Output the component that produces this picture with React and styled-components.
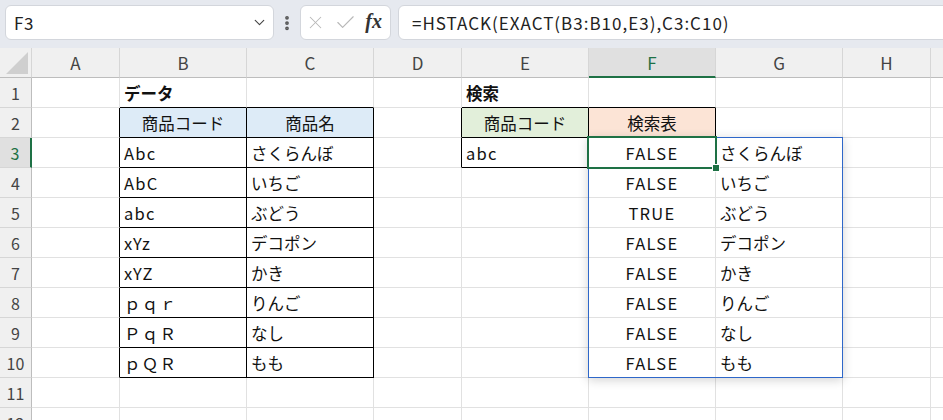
import React from 'react'
import styled, { createGlobalStyle } from 'styled-components'
import { ChevronDown, EllipsisVertical, X, Check } from 'lucide-react'

const FONT = '"Noto Sans CJK JP", "Noto Sans", sans-serif'

const Global = createGlobalStyle`
  html, body {
    margin: 0;
    background: #fff;
    font-family: ${FONT};
    overflow: hidden;
  }
`

const COLS = ['A', 'B', 'C', 'D', 'E', 'F', 'G', 'H', '']
const WIDTHS = [32, 88, 127, 127, 88, 127, 127, 127, 88, 100]

const codes = ['Abc', 'AbC', 'abc', 'xYz', 'xYZ', 'ｐｑｒ', 'ＰｑＲ', 'ｐＱＲ']
const names = ['さくらんぼ', 'いちご', 'ぶどう', 'デコポン', 'かき', 'りんご', 'なし', 'もも']
const flags = codes.map((c) => (c === 'abc' ? 'TRUE' : 'FALSE'))

export default function App() {
  // build cell data per row: index 0..8 => A..I
  const rows = []
  for (let r = 1; r <= 12; r++) {
    const cells = COLS.map(() => ({ text: '', bg: null, rb: null, bb: null }))
    if (r === 1) {
      cells[1].text = 'データ'
      cells[1].bold = true
      cells[4].text = '検索'
      cells[4].bold = true
    }
    if (r === 2) {
      cells[1] = { text: '商品コード', bg: '#ddebf7', center: true }
      cells[2] = { text: '商品名', bg: '#ddebf7', center: true }
      cells[4] = { text: '商品コード', bg: '#e2efda', center: true }
      cells[5] = { text: '検索表', bg: '#fce4d6', center: true }
    }
    if (r >= 3 && r <= 10) {
      cells[1].text = codes[r - 3]
      cells[1].latin = true
      cells[2].text = names[r - 3]
      cells[5].text = flags[r - 3]
      cells[5].center = true
      cells[5].latin = true
      cells[6].text = names[r - 3]
    }
    if (r === 3) {
      cells[4].text = 'abc'
      cells[4].latin = true
    }

    // black borders for the two tables
    if (r === 1) {
      ;[1, 2, 4, 5].forEach((i) => (cells[i].bb = '#000'))
    }
    if (r >= 2 && r <= 10) {
      cells[0].rb = '#000'
      cells[1].rb = '#000'
      cells[2].rb = '#000'
      cells[1].bb = '#000'
      cells[2].bb = '#000'
    }
    if (r === 2) {
      cells[3].rb = '#000'
      cells[4].rb = '#000'
      cells[5].rb = '#000'
      cells[4].bb = '#000'
      cells[5].bb = '#000'
    }
    if (r === 3) {
      cells[3].rb = '#000'
      cells[4].rb = '#000'
      cells[4].bb = '#000'
    }
    rows.push(cells)
  }

  return (
    <Page>
      <Global />
      <TopBar>
        <NameBox>
          <span>F3</span>
          <ChevronDown size={17} strokeWidth={1.6} color="#444" />
        </NameBox>
        <Dots>
          <EllipsisVertical size={18} strokeWidth={3} color="#555" />
        </Dots>
        <FxBox>
          <X size={21} strokeWidth={1.2} color="#b8b8b8" />
          <Check size={23} strokeWidth={1.2} color="#b8b8b8" />
          <Fx>fx</Fx>
        </FxBox>
        <FormulaBox>=HSTACK(EXACT(B3:B10,E3),C3:C10)</FormulaBox>
      </TopBar>

      <Sheet>
        <Corner>
          <svg width="22" height="22" viewBox="0 0 22 22">
            <polygon points="22,0 22,22 0,22" fill="#cfcfcf" />
          </svg>
        </Corner>
        {COLS.map((c, i) => (
          <ColHead key={i} $active={c === 'F'}>
            {c}
          </ColHead>
        ))}
        {rows.map((cells, ri) => (
          <React.Fragment key={ri}>
            <RowHead $active={ri === 2}>{ri + 1}</RowHead>
            {cells.map((cell, ci) => (
              <Cell
                key={ci}
                $bg={cell.bg}
                $rb={cell.rb}
                $bb={cell.bb}
                $center={cell.center}
                $bold={cell.bold}
                $latin={cell.latin}
              >
                {cell.text}
              </Cell>
            ))}
          </React.Fragment>
        ))}
        <Spill />
        <Selection>
          <Handle />
        </Selection>
      </Sheet>
    </Page>
  )
}

const Page = styled.div`
  width: 943px;
  height: 420px;
  overflow: hidden;
`

const TopBar = styled.div`
  height: 48px;
  box-sizing: border-box;
  background: #e6e9ef;
  display: flex;
  align-items: flex-start;
  padding: 5px 0 0 5px;
`

const BoxBase = styled.div`
  height: 35px;
  box-sizing: border-box;
  background: #fff;
  border: 1px solid #d3d6dc;
  border-radius: 6px;
  display: flex;
  align-items: center;
`

const NameBox = styled(BoxBase)`
  width: 269px;
  padding: 0 5px 0 8px;
  justify-content: space-between;
  font-size: 17px;
  letter-spacing: 0.5px;
  color: #222;
`

const Dots = styled.div`
  width: 24px;
  display: flex;
  justify-content: center;
  align-items: center;
  height: 35px;
  margin-left: 1px;
`

const FxBox = styled(BoxBase)`
  width: 91px;
  margin-left: 1px;
  padding: 0 8px 0 4px;
  justify-content: space-between;
`

const Fx = styled.span`
  font-family: "Liberation Serif", serif;
  font-style: italic;
  font-weight: bold;
  font-size: 20px;
  color: #333;
  margin-bottom: 3px;
`

const FormulaBox = styled(BoxBase)`
  flex: 1;
  margin-left: 7px;
  margin-right: -10px;
  padding-left: 13px;
  font-size: 17px;
  letter-spacing: 1px;
  color: #222;
`

const Sheet = styled.div`
  position: relative;
  display: grid;
  grid-template-columns: ${WIDTHS.map((w) => w + 'px').join(' ')};
  grid-auto-rows: 30px;
`

const Corner = styled.div`
  box-sizing: border-box;
  background: #f0f0f0;
  border-right: 1px solid #d6d6d6;
  border-bottom: 1px solid #bdbdbd;
  display: flex;
  align-items: flex-end;
  justify-content: flex-end;
  padding: 0 3px 3px 0;
`

const ColHead = styled.div`
  box-sizing: border-box;
  background: ${(p) => (p.$active ? '#e0e0e0' : '#f0f0f0')};
  border-right: 1px solid #d6d6d6;
  border-bottom: ${(p) => (p.$active ? '2px solid #1e7145' : '1px solid #bdbdbd')};
  display: flex;
  align-items: center;
  justify-content: center;
  font-size: 17px;
  color: ${(p) => (p.$active ? '#1e7145' : '#444')};
  padding-top: ${(p) => (p.$active ? '1px' : '0')};
`

const RowHead = styled.div`
  box-sizing: border-box;
  background: ${(p) => (p.$active ? '#e0e0e0' : '#f0f0f0')};
  border-right: ${(p) => (p.$active ? '2px solid #1e7145' : '1px solid #bdbdbd')};
  border-bottom: 1px solid #d6d6d6;
  display: flex;
  align-items: center;
  justify-content: center;
  font-size: 16px;
  color: ${(p) => (p.$active ? '#1e7145' : '#444')};
`

const Cell = styled.div`
  box-sizing: border-box;
  background: ${(p) => p.$bg || '#fff'};
  border-right: 1px solid ${(p) => p.$rb || '#e1e1e1'};
  border-bottom: 1px solid ${(p) => p.$bb || '#e1e1e1'};
  display: flex;
  align-items: center;
  justify-content: ${(p) => (p.$center ? 'center' : 'flex-start')};
  padding: 1px 4px 0;
  font-size: 16.5px;
  letter-spacing: ${(p) => (p.$latin ? '1.3px' : '0')};
  font-weight: ${(p) => (p.$bold ? 700 : 400)};
  color: #111;
  white-space: nowrap;
  overflow: hidden;
`

const Spill = styled.div`
  position: absolute;
  left: 588px;
  top: 89px;
  width: 255px;
  height: 241px;
  box-sizing: border-box;
  border: 1px solid #2e67c9;
  box-shadow: 0 2px 10px rgba(0, 0, 0, 0.18);
  pointer-events: none;
`

const Selection = styled.div`
  position: absolute;
  left: 587px;
  top: 88px;
  width: 130px;
  height: 33px;
  box-sizing: border-box;
  border: 2px solid #1e7145;
  pointer-events: none;
`

const Handle = styled.div`
  position: absolute;
  right: -5px;
  bottom: -5px;
  width: 6px;
  height: 6px;
  background: #1e7145;
  border: 1px solid #fff;
`
